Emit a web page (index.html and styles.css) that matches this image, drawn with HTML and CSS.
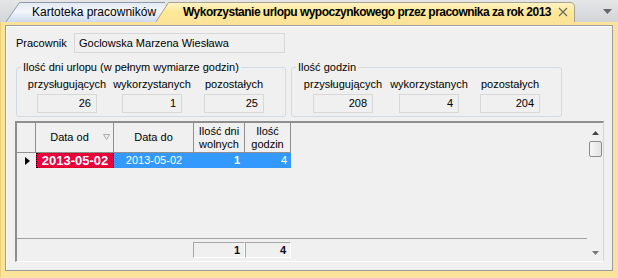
FILE: index.html
```html
<!DOCTYPE html>
<html lang="pl">
<head>
<meta charset="utf-8">
<link rel="stylesheet" href="styles.css">
</head>
<body>
<div class="tabstrip">
  <div class="tab tab-inactive">
    <svg class="tab-shape" width="160" height="20" viewBox="0 0 160 20">
      <defs>
        <linearGradient id="gBlue" x1="0" y1="0" x2="0" y2="1">
          <stop offset="0" stop-color="#e3e9f2"/>
          <stop offset="0.45" stop-color="#f3f6fb"/>
          <stop offset="1" stop-color="#cbd8ec"/>
        </linearGradient>
      </defs>
      <polygon points="0,20.5 14.5,0.5 160,0.5 160,20.5" fill="url(#gBlue)"/>
      <polyline points="0.5,20.5 14.5,0.5 160,0.5" fill="none" stroke="#8e9aab"/>
    </svg>
    <span class="tab-label">Kartoteka pracowników</span>
  </div>
  <div class="tab tab-active">
    <svg class="tab-shape" width="420" height="20" viewBox="0 0 420 20">
      <defs>
        <linearGradient id="gYellow" x1="0" y1="0" x2="0" y2="1">
          <stop offset="0" stop-color="#fff4c6"/>
          <stop offset="0.5" stop-color="#ffe894"/>
          <stop offset="1" stop-color="#fbe39a"/>
        </linearGradient>
      </defs>
      <path d="M0,20.5 L13.5,0.5 L415,0.5 Q419.5,0.5 419.5,5 L419.5,20.5 Z" fill="url(#gYellow)"/>
      <path d="M0.5,20.5 L13.5,0.5 L415,0.5 Q419.5,0.5 419.5,5 L419.5,20.5" fill="none" stroke="#a8a290"/>
    </svg>
    <span class="tab-label tab-label-bold">Wykorzystanie urlopu wypoczynkowego przez pracownika za rok 2013</span>
    <svg class="close" width="10" height="10" viewBox="0 0 10 10">
      <path d="M1,1 L9,9 M9,1 L1,9" stroke="#6c6c6c" stroke-width="1.3"/>
    </svg>
  </div>
  <div class="strip-fill">
    <svg class="dropdown" width="9" height="5" viewBox="0 0 9 5">
      <polygon points="0,0 9,0 4.5,5" fill="#666"/>
    </svg>
  </div>
</div>
<div class="frame">
  <div class="panel">
    <div class="emp-row">
      <span class="emp-label">Pracownik</span>
      <div class="emp-field">Goclowska Marzena Wiesława</div>
    </div>
    <div class="groups">
      <fieldset class="group group-days">
        <legend>Ilość dni urlopu (w pełnym wymiarze godzin)</legend>
        <div class="cols">
          <div class="col"><span class="col-label">przysługujących</span><div class="val">26</div></div>
          <div class="col"><span class="col-label">wykorzystanych</span><div class="val">1</div></div>
          <div class="col"><span class="col-label">pozostałych</span><div class="val">25</div></div>
        </div>
      </fieldset>
      <fieldset class="group group-hours">
        <legend>Ilość godzin</legend>
        <div class="cols">
          <div class="col"><span class="col-label">przysługujących</span><div class="val">208</div></div>
          <div class="col"><span class="col-label">wykorzystanych</span><div class="val">4</div></div>
          <div class="col"><span class="col-label">pozostałych</span><div class="val">204</div></div>
        </div>
      </fieldset>
    </div>
    <div class="grid">
      <div class="grid-main">
        <div class="hdr">
          <div class="hc c-ind"></div>
          <div class="hc c-od"><span>Data od</span>
            <svg class="sort" width="7" height="6" viewBox="0 0 7 6"><polygon points="0.5,0.5 6.5,0.5 3.5,5.5" fill="none" stroke="#a8a8a8"/></svg>
          </div>
          <div class="hc c-do">Data do</div>
          <div class="hc c-dni">Ilość dni<br>wolnych</div>
          <div class="hc c-godz">Ilość<br>godzin</div>
        </div>
        <div class="data-row">
          <div class="dc c-ind">
            <svg width="5" height="8" viewBox="0 0 5 8"><polygon points="0,0 5,4 0,8" fill="#000"/></svg>
          </div>
          <div class="dc c-od cell-focus">2013-05-02</div>
          <div class="dc c-do cell-sel">2013-05-02</div>
          <div class="dc c-dni cell-sel num bold">1</div>
          <div class="dc c-godz cell-sel num">4</div>
        </div>
        <div class="grid-space"></div>
        <div class="footer">
          <div class="fc fc-dni">1</div>
          <div class="fc fc-godz">4</div>
        </div>
      </div>
      <div class="vscroll">
        <svg class="arrow-up" width="7" height="4" viewBox="0 0 7 4"><polygon points="0,4 7,4 3.5,0" fill="#444"/></svg>
        <div class="thumb"></div>
        <div class="scroll-space"></div>
        <svg class="arrow-down" width="7" height="4" viewBox="0 0 7 4"><polygon points="0,0 7,0 3.5,4" fill="#777"/></svg>
      </div>
    </div>
  </div>
</div>
</body>
</html>
```
FILE: styles.css
```css
* { box-sizing: border-box; }
html, body {
  margin: 0;
  padding: 0;
}
body {
  width: 618px;
  height: 278px;
  overflow: hidden;
  font-family: "Liberation Sans", Arial, sans-serif;
  font-size: 11px;
  color: #000;
  background: #f0f0f0;
}

/* tab strip */
.tabstrip {
  height: 22px;
  display: flex;
  align-items: flex-end;
  background: linear-gradient(#e6e6e6, #d2d4d8);
  padding-left: 5px;
}
.tab {
  position: relative;
  height: 20px;
  display: flex;
  align-items: center;
  flex: none;
}
.tab-shape {
  position: absolute;
  left: 0;
  top: 0;
}
.tab-label {
  position: relative;
  font-size: 12px;
  line-height: 20px;
  white-space: nowrap;
  padding-bottom: 1px;
}
.tab-inactive {
  width: 160px;
  padding-left: 27px;
  z-index: 1;
}
.tab-active {
  width: 420px;
  margin-left: -10px;
  padding-left: 28px;
  z-index: 2;
}
.tab-label-bold {
  font-weight: bold;
  font-size: 12px;
  letter-spacing: -0.52px;
}
.close {
  position: relative;
  margin-left: auto;
  margin-right: 7px;
  margin-top: -1px;
}
.strip-fill {
  flex: 1;
  height: 22px;
  display: flex;
  align-items: center;
  justify-content: flex-end;
  padding-right: 6px;
}
.dropdown { display: block; margin-top: 0; }

/* frame */
.frame {
  height: 256px;
  background: #fbe49a;
  padding: 3px 5px 6px 5px;
  border-left: 1px solid #edd07a;
  border-bottom: 1px solid #f6e6b0;
}
.panel {
  height: 100%;
  margin-left: -1px;
  border: 1px solid #9c9c9c;
  background: #f0f0f0;
  padding: 7px 0 0 10px;
  box-shadow: inset 1px 1px 0 #ffffff;
}

.emp-row {
  display: flex;
  align-items: center;
  height: 20px;
}
.emp-label {
  width: 58px;
  flex: none;
}
.emp-field {
  width: 211px;
  height: 20px;
  border: 1px solid #d8d8d8;
  padding-left: 4px;
  line-height: 18px;
  background: #f0f0f0;
}

.groups {
  display: flex;
  margin-top: 8px;
}
.group {
  margin: 0;
  border: 1px solid #d4dbe0;
  border-radius: 3px;
  padding: 3px 0 3px 0;
  min-width: 0;
}
.group legend {
  padding: 0 2px;
  margin-left: 4px;
  line-height: 13px;
}
.group-days { width: 270px; }
.group-hours { width: 271px; margin-left: 5px; }
.cols {
  display: grid;
  align-items: center;
}
.group-days .cols {
  grid-template-columns: 84px 86px 78px;
  padding-left: 8px;
}
.group-hours .cols {
  grid-template-columns: 84px 88px 74px;
  padding-left: 9px;
}
.col {
  display: flex;
  flex-direction: column;
  align-items: center;
}
.col-label {
  line-height: 14px;
  white-space: nowrap;
}
.val {
  margin-top: 3px;
  width: 60px;
  height: 19px;
  border: 1px solid #d8d8d8;
  text-align: right;
  padding-right: 5px;
  line-height: 17px;
}

/* grid */
.grid {
  margin: 4px 0 0 -1px;
  width: 589px;
  height: 141px;
  display: flex;
  border-top: 2px solid #8e8e8e;
  border-left: 2px solid #8e8e8e;
  border-right: 1px solid #d6d6d6;
  border-bottom: 1px solid #ffffff;
}
.grid-main {
  width: 570px;
  display: flex;
  flex-direction: column;
}
.hdr {
  display: flex;
  height: 30px;
}
.hc {
  border-right: 1px solid #8f8f8f;
  border-bottom: 1px solid #8f8f8f;
  display: flex;
  align-items: center;
  justify-content: center;
  text-align: center;
  line-height: 13px;
  position: relative;
}
.c-ind { width: 19px; }
.c-od { width: 78px; }
.c-do { width: 80px; }
.c-dni { width: 51px; }
.c-godz { width: 46px; }
.hc.c-od span { margin-left: -10px; }
.sort {
  position: absolute;
  right: 3px;
  top: 11px;
}
.data-row {
  display: flex;
  height: 15px;
}
.dc {
  line-height: 15px;
  text-align: center;
  white-space: nowrap;
}
.dc.c-ind {
  display: flex;
  align-items: center;
  justify-content: center;
  padding-left: 1px;
}
.cell-focus {
  background: #e8003c;
  color: #fff;
  font-weight: bold;
  font-size: 13px;
  line-height: 13px;
  border: 1px dotted #ffffff;
  outline: 1px dotted #000;
  outline-offset: -1px;
}
.cell-sel {
  background: #3399ff;
  color: #fff;
}
.num { text-align: right; padding-right: 4px; }
.dc.c-dni.num { padding-right: 5px; }
.bold { font-weight: bold; }
.grid-space { flex: 1; }
.footer {
  height: 23px;
  border-top: 1px solid #a0a0a0;
  display: flex;
  padding: 3px 0 0 176px;
}
.fc {
  height: 16px;
  border-top: 1px solid #a8a8a8;
  border-left: 1px solid #a8a8a8;
  border-bottom: 1px solid #fff;
  border-right: 1px solid #fff;
  font-weight: bold;
  color: #0a0a20;
  text-align: right;
  padding-right: 4px;
  line-height: 14px;
}
.fc-dni { width: 52px; }
.fc-godz { width: 46px; }

.vscroll {
  width: 16px;
  display: flex;
  flex-direction: column;
  align-items: center;
}
.arrow-up { display: block; margin-top: 8px; }
.thumb {
  margin-top: 6px;
  width: 13px;
  height: 16px;
  border: 1px solid #8c8c8c;
  border-radius: 2px;
  background: linear-gradient(90deg, #f6f6f6, #e2e2e2);
}
.scroll-space { flex: 1; }
.arrow-down { display: block; margin-bottom: 6px; }
```
